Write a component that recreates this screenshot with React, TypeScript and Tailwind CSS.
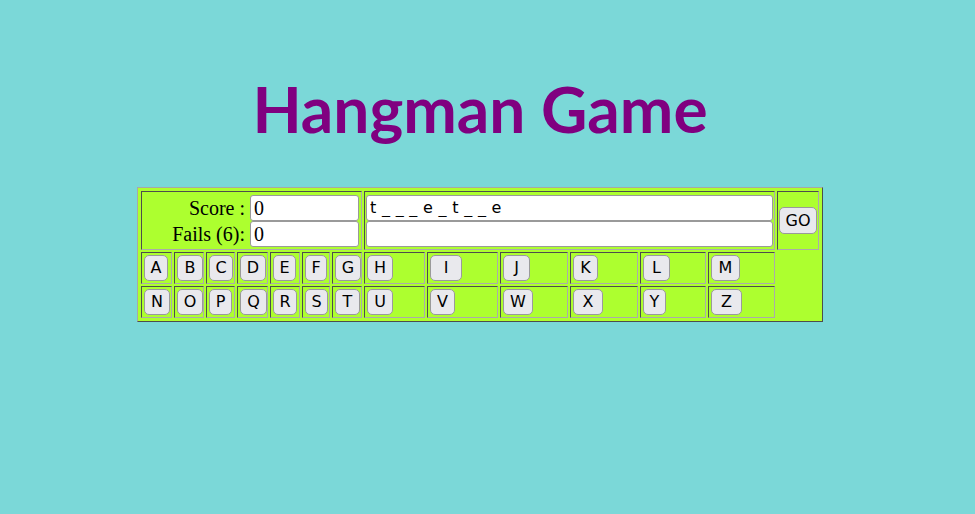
import React from 'react';

const ROW_ONE = [
  { l: 'A', w: 24 }, { l: 'B', w: 26 }, { l: 'C', w: 24 }, { l: 'D', w: 26 },
  { l: 'E', w: 23 }, { l: 'F', w: 22 }, { l: 'G', w: 26 }, { l: 'H', w: 26 },
  { l: 'I', w: 32 }, { l: 'J', w: 27 }, { l: 'K', w: 25 }, { l: 'L', w: 27 },
  { l: 'M', w: 29 },
];

const ROW_TWO = [
  { l: 'N', w: 26 }, { l: 'O', w: 26 }, { l: 'P', w: 23 }, { l: 'Q', w: 27 },
  { l: 'R', w: 24 }, { l: 'S', w: 23 }, { l: 'T', w: 25 }, { l: 'U', w: 26 },
  { l: 'V', w: 25 }, { l: 'W', w: 30 }, { l: 'X', w: 30 }, { l: 'Y', w: 23 },
  { l: 'Z', w: 31 },
];

const cell = 'bg-[#adff2f] border border-t-[#4d4d4d] border-l-[#4d4d4d] border-b-[#ababab] border-r-[#ababab]';
const btn =
  'h-[26px] bg-[#e9e9ed] border border-[#9a9a9a] rounded-[5px] text-black text-[16px] leading-none flex items-center justify-center font-["DejaVu_Sans",sans-serif]';
const input =
  'h-[26px] w-full bg-white border border-[#9a9a9a] rounded-[3px] outline-none px-[3px]';

const LetterCell: React.FC<{ l: string; w: number }> = ({ l, w }) => (
  <div className={`${cell} flex items-center pl-[2px]`}>
    <button className={btn} style={{ width: w }}>
      {l}
    </button>
  </div>
);

export default function App() {
  return (
    <div className="min-h-[514px] bg-[#7bd8d8]">
      <div className="w-[960px] flex flex-col items-center">
        <h1 className="mt-[70px] text-[64px] leading-[77px] font-bold text-[#800080] font-['Lato',sans-serif]">
          Hangman Game
        </h1>

        <div className="mt-[40px] bg-[#adff2f] p-[3px] border border-t-[#a8a8a8] border-l-[#a8a8a8] border-b-[#4d4d4d] border-r-[#4d4d4d]">
          <div className="grid gap-[2px] grid-cols-[31px_30px_29px_31px_30px_28px_30px_61px_71px_68px_68px_66px_67px_42px] grid-rows-[59px_32px_32px]">
            {/* score / fails */}
            <div className={`${cell} col-span-7 flex items-center pr-[2px]`}>
              <div className="grid grid-cols-[103px_109px] gap-x-[5px] items-center font-['Liberation_Serif',serif] text-[20px] text-black">
                <div className="text-right leading-[26px]">Score :</div>
                <input className={`${input} text-[20px]`} defaultValue="0" readOnly />
                <div className="text-right leading-[26px]">Fails (6):</div>
                <input className={`${input} text-[20px]`} defaultValue="0" readOnly />
              </div>
            </div>

            {/* word */}
            <div className={`${cell} col-span-6 flex flex-col justify-center px-[1px]`}>
              <input
                className={`${input} text-[16px] tracking-[0.3px] font-['DejaVu_Sans',sans-serif] text-black`}
                defaultValue="t _ _ _ e _ t _ _ e"
                readOnly
              />
              <input className={input} defaultValue="" readOnly />
            </div>

            <div className={`${cell} flex items-center justify-center`}>
              <button className={`${btn} w-[38px] h-[27px]`}>GO</button>
            </div>

            {ROW_ONE.map((b) => (
              <LetterCell key={b.l} l={b.l} w={b.w} />
            ))}
            <div />
            {ROW_TWO.map((b) => (
              <LetterCell key={b.l} l={b.l} w={b.w} />
            ))}
            <div />
          </div>
        </div>
      </div>
    </div>
  );
}
